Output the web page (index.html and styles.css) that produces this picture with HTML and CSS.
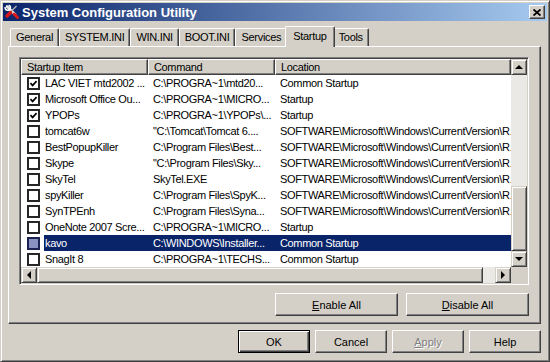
FILE: index.html
```html
<!DOCTYPE html>
<html lang="en">
<head>
    <meta charset="UTF-8">
    <meta name="viewport" content="width=device-width, initial-scale=1.0">
    <title>System Configuration Utility</title>
    <link rel="stylesheet" href="styles.css">
</head>
<body>
    <div class="window">
        <div class="titlebar">
            <svg class="app-icon" width="16" height="16" viewBox="0 0 16 16">
                <path d="M3 2.5 L11 10.5" stroke="#e8e8e8" stroke-width="2.6" stroke-linecap="round"/>
                <path d="M1.2 3.2 A2.6 2.6 0 1 0 4.6 1.2" fill="none" stroke="#ffffff" stroke-width="1.6"/>
                <path d="M12.5 2 L5 9.5" stroke="#b0b0b0" stroke-width="1.4"/>
                <path d="M6.5 8.5 L3 12" stroke="#d81818" stroke-width="3.4" stroke-linecap="round"/>
                <path d="M10 10 L13.5 13.5" stroke="#d81818" stroke-width="3" stroke-linecap="round"/>
            </svg>
            <span class="title">System Configuration Utility</span>
            <div class="close-btn">
                <svg width="8" height="7" viewBox="0 0 8 7">
                    <path d="M0.5 0.5 L7.5 6.5 M7.5 0.5 L0.5 6.5" stroke="#000" stroke-width="1.8"/>
                </svg>
            </div>
        </div>

        <div class="dialog">
            <div class="tabs">
                <div class="tab">General</div>
                <div class="tab">SYSTEM.INI</div>
                <div class="tab">WIN.INI</div>
                <div class="tab">BOOT.INI</div>
                <div class="tab">Services</div>
                <div class="tab active">Startup</div>
                <div class="tab">Tools</div>
            </div>

            <div class="panel">
                <div class="listview">
                    <div class="lv-body">
                        <div class="lv-header">
                            <div class="lv-head">Startup Item</div>
                            <div class="lv-head">Command</div>
                            <div class="lv-head">Location</div>
                        </div>

                        <div class="lv-row">
                            <div class="lv-item"><span class="check on"></span><span class="label">LAC VIET mtd2002 ...</span></div>
                            <div class="lv-cell">C:\PROGRA~1\mtd20...</div>
                            <div class="lv-cell">Common Startup</div>
                        </div>
                        <div class="lv-row">
                            <div class="lv-item"><span class="check on"></span><span class="label">Microsoft Office Ou...</span></div>
                            <div class="lv-cell">C:\PROGRA~1\MICRO...</div>
                            <div class="lv-cell">Startup</div>
                        </div>
                        <div class="lv-row">
                            <div class="lv-item"><span class="check on"></span><span class="label">YPOPs</span></div>
                            <div class="lv-cell">C:\PROGRA~1\YPOPs\...</div>
                            <div class="lv-cell">Startup</div>
                        </div>
                        <div class="lv-row">
                            <div class="lv-item"><span class="check"></span><span class="label">tomcat6w</span></div>
                            <div class="lv-cell">"C:\Tomcat\Tomcat 6....</div>
                            <div class="lv-cell">SOFTWARE\Microsoft\Windows\CurrentVersion\R.</div>
                        </div>
                        <div class="lv-row">
                            <div class="lv-item"><span class="check"></span><span class="label">BestPopupKiller</span></div>
                            <div class="lv-cell">C:\Program Files\Best...</div>
                            <div class="lv-cell">SOFTWARE\Microsoft\Windows\CurrentVersion\R.</div>
                        </div>
                        <div class="lv-row">
                            <div class="lv-item"><span class="check"></span><span class="label">Skype</span></div>
                            <div class="lv-cell">"C:\Program Files\Sky...</div>
                            <div class="lv-cell">SOFTWARE\Microsoft\Windows\CurrentVersion\R.</div>
                        </div>
                        <div class="lv-row">
                            <div class="lv-item"><span class="check"></span><span class="label">SkyTel</span></div>
                            <div class="lv-cell">SkyTel.EXE</div>
                            <div class="lv-cell">SOFTWARE\Microsoft\Windows\CurrentVersion\R.</div>
                        </div>
                        <div class="lv-row">
                            <div class="lv-item"><span class="check"></span><span class="label">spyKiller</span></div>
                            <div class="lv-cell">C:\Program Files\SpyK...</div>
                            <div class="lv-cell">SOFTWARE\Microsoft\Windows\CurrentVersion\R.</div>
                        </div>
                        <div class="lv-row">
                            <div class="lv-item"><span class="check"></span><span class="label">SynTPEnh</span></div>
                            <div class="lv-cell">C:\Program Files\Syna...</div>
                            <div class="lv-cell">SOFTWARE\Microsoft\Windows\CurrentVersion\R.</div>
                        </div>
                        <div class="lv-row">
                            <div class="lv-item"><span class="check"></span><span class="label">OneNote 2007 Scre...</span></div>
                            <div class="lv-cell">C:\PROGRA~1\MICRO...</div>
                            <div class="lv-cell">Startup</div>
                        </div>
                        <div class="lv-row selected">
                            <div class="lv-item"><span class="check"></span><span class="label">kavo</span></div>
                            <div class="lv-cell">C:\WINDOWS\Installer...</div>
                            <div class="lv-cell">Common Startup</div>
                        </div>
                        <div class="lv-row">
                            <div class="lv-item"><span class="check"></span><span class="label">SnagIt 8</span></div>
                            <div class="lv-cell">C:\PROGRA~1\TECHS...</div>
                            <div class="lv-cell">Common Startup</div>
                        </div>
                    </div>

                    <div class="vscroll">
                        <div class="sb-btn"><span class="arrow up"></span></div>
                        <div class="sb-track"></div>
                        <div class="sb-thumb"></div>
                        <div class="sb-btn"><span class="arrow down"></span></div>
                    </div>

                    <div class="hscroll">
                        <div class="sb-btn"><span class="arrow left"></span></div>
                        <div class="sb-thumb"></div>
                        <div class="sb-track"></div>
                        <div class="sb-btn"><span class="arrow right"></span></div>
                    </div>
                    <div class="sb-corner"></div>
                </div>

                <div class="panel-actions">
                    <button class="btn wide"><u>E</u>nable All</button>
                    <button class="btn wide"><u>D</u>isable All</button>
                </div>
            </div>

            <div class="dialog-actions">
                <button class="btn default">OK</button>
                <button class="btn">Cancel</button>
                <button class="btn" disabled><u>A</u>pply</button>
                <button class="btn">Help</button>
            </div>
        </div>
    </div>
</body>
</html>
```

FILE: styles.css
```css
* {
    box-sizing: border-box;
}
html, body {
    margin: 0;
}
body {
    width: 550px;
    height: 362px;
    overflow: hidden;
    background: #d4d0c8;
    font-family: "Liberation Sans", Arial, sans-serif;
    font-size: 11px;
    color: #000;
}

/* window frame */
.window {
    width: 550px;
    height: 362px;
    display: flex;
    flex-direction: column;
    padding: 2px;
    background: #d4d0c8;
    border: 1px solid;
    border-color: #d4d0c8 #404040 #404040 #d4d0c8;
    box-shadow: inset 1px 1px #fff, inset -1px -1px #808080;
}
.titlebar {
    height: 18px;
    display: flex;
    align-items: center;
    padding: 0 2px 0 1px;
    background: linear-gradient(to right, #0a246a, #a6caf0);
}
.app-icon {
    flex: none;
}
.title {
    flex: 1;
    margin-left: 2px;
    color: #fff;
    font-weight: bold;
    font-size: 13px;
    white-space: nowrap;
}
.close-btn {
    width: 16px;
    height: 14px;
    display: flex;
    align-items: center;
    justify-content: center;
    background: #d4d0c8;
    border: 1px solid;
    border-color: #fff #404040 #404040 #fff;
    box-shadow: inset -1px -1px #808080;
}

/* dialog body */
.dialog {
    flex: 1;
    display: flex;
    flex-direction: column;
    padding: 5px 6px 0 5px;
}
.tabs {
    height: 20px;
    display: flex;
    align-items: flex-start;
    padding-left: 2px;
    position: relative;
    z-index: 1;
    letter-spacing: -0.3px;
}
.tab {
    height: 18px;
    margin-top: 2px;
    padding: 0 5px;
    line-height: 16px;
    white-space: nowrap;
    background: #d4d0c8;
    border-top: 1px solid #fff;
    border-left: 1px solid #fff;
    border-right: 1px solid #404040;
    border-radius: 2px 2px 0 0;
    box-shadow: inset -1px 0 #808080;
}
.tab.active {
    height: 21px;
    margin: 0 -2px;
    padding: 0 7px;
    line-height: 18px;
    position: relative;
    z-index: 2;
}
.panel {
    height: 278px;
    display: flex;
    flex-direction: column;
    padding: 10px 11px 0 10px;
    border: 1px solid;
    border-color: #fff #404040 #404040 #fff;
    box-shadow: inset -1px -1px #808080;
}

/* list view */
.listview {
    height: 228px;
    display: grid;
    grid-template-columns: 1fr 16px;
    grid-template-rows: 1fr 16px;
    padding: 1px;
    background: #fff;
    border: 1px solid;
    border-color: #808080 #fff #fff #808080;
    box-shadow: inset 1px 1px #404040, inset -1px -1px #d4d0c8;
}
.lv-body {
    overflow: hidden;
    letter-spacing: -0.35px;
}
.lv-header,
.lv-row {
    display: grid;
    grid-template-columns: 127px 127px 1fr;
    height: 16px;
}
.lv-head {
    padding-left: 5px;
    line-height: 14px;
    white-space: nowrap;
    background: #d4d0c8;
    border: 1px solid;
    border-color: #fff #404040 #404040 #fff;
    box-shadow: inset -1px -1px #808080;
}
.lv-item {
    display: flex;
    align-items: center;
    padding-left: 6px;
    overflow: hidden;
}
.label,
.lv-cell {
    line-height: 16px;
    white-space: nowrap;
    overflow: hidden;
}
.label {
    flex: 1;
    margin-left: 4px;
    padding-left: 1px;
}
.lv-cell {
    padding-left: 5px;
}
.lv-row.selected .label,
.lv-row.selected .lv-cell {
    background: #0a246a;
    color: #fff;
}
.check {
    flex: none;
    width: 13px;
    height: 13px;
    background: #fff;
    border: 2px solid #262626;
}
.check.on {
    background: #fff url("data:image/svg+xml,%3Csvg xmlns='http://www.w3.org/2000/svg' width='9' height='9'%3E%3Cpath d='M1.5 4.2 L3.6 6.4 L7.6 2.2' fill='none' stroke='%23000' stroke-width='1.7'/%3E%3C/svg%3E") center/9px 9px no-repeat;
}
.lv-row.selected .check {
    background: #8a92c2;
    border-color: #1c2350;
}

/* scroll bars */
.vscroll {
    display: flex;
    flex-direction: column;
}
.hscroll {
    display: flex;
}
.sb-btn {
    flex: none;
    width: 16px;
    height: 16px;
    display: flex;
    align-items: center;
    justify-content: center;
    background: #d4d0c8;
    border: 1px solid;
    border-color: #d4d0c8 #404040 #404040 #d4d0c8;
    box-shadow: inset 1px 1px #fff, inset -1px -1px #808080;
}
.vscroll .sb-track {
    height: 111px;
    background: #ebe9e5;
}
.hscroll .sb-track {
    width: 12px;
    background: #ebe9e5;
}
.sb-thumb {
    flex: 1;
    background: #d4d0c8;
    border: 1px solid;
    border-color: #d4d0c8 #404040 #404040 #d4d0c8;
    box-shadow: inset 1px 1px #fff, inset -1px -1px #808080;
}
.sb-corner {
    background: #d4d0c8;
}
.arrow {
    width: 0;
    height: 0;
    border: 4px solid transparent;
}
.arrow.up {
    border-bottom-color: #000;
    border-top-width: 0;
}
.arrow.down {
    border-top-color: #000;
    border-bottom-width: 0;
}
.arrow.left {
    border-right-color: #000;
    border-left-width: 0;
}
.arrow.right {
    border-left-color: #000;
    border-right-width: 0;
}

/* buttons */
.btn {
    height: 23px;
    width: 72px;
    padding: 0;
    font: inherit;
    color: #000;
    background: #d4d0c8;
    border: 1px solid;
    border-color: #fff #404040 #404040 #fff;
    box-shadow: inset -1px -1px #808080;
}
.btn.wide {
    width: 123px;
}
.btn.default {
    border: 1px solid #000;
    box-shadow: inset 1px 1px #fff, inset -1px -1px #404040, inset -2px -2px #808080;
}
.btn:disabled {
    color: #808080;
    text-shadow: 1px 1px #fff;
}
.panel-actions {
    display: flex;
    justify-content: flex-end;
    gap: 8px;
    margin-top: 8px;
}
.dialog-actions {
    display: flex;
    justify-content: flex-end;
    gap: 5px;
    margin-top: 6px;
}
```
